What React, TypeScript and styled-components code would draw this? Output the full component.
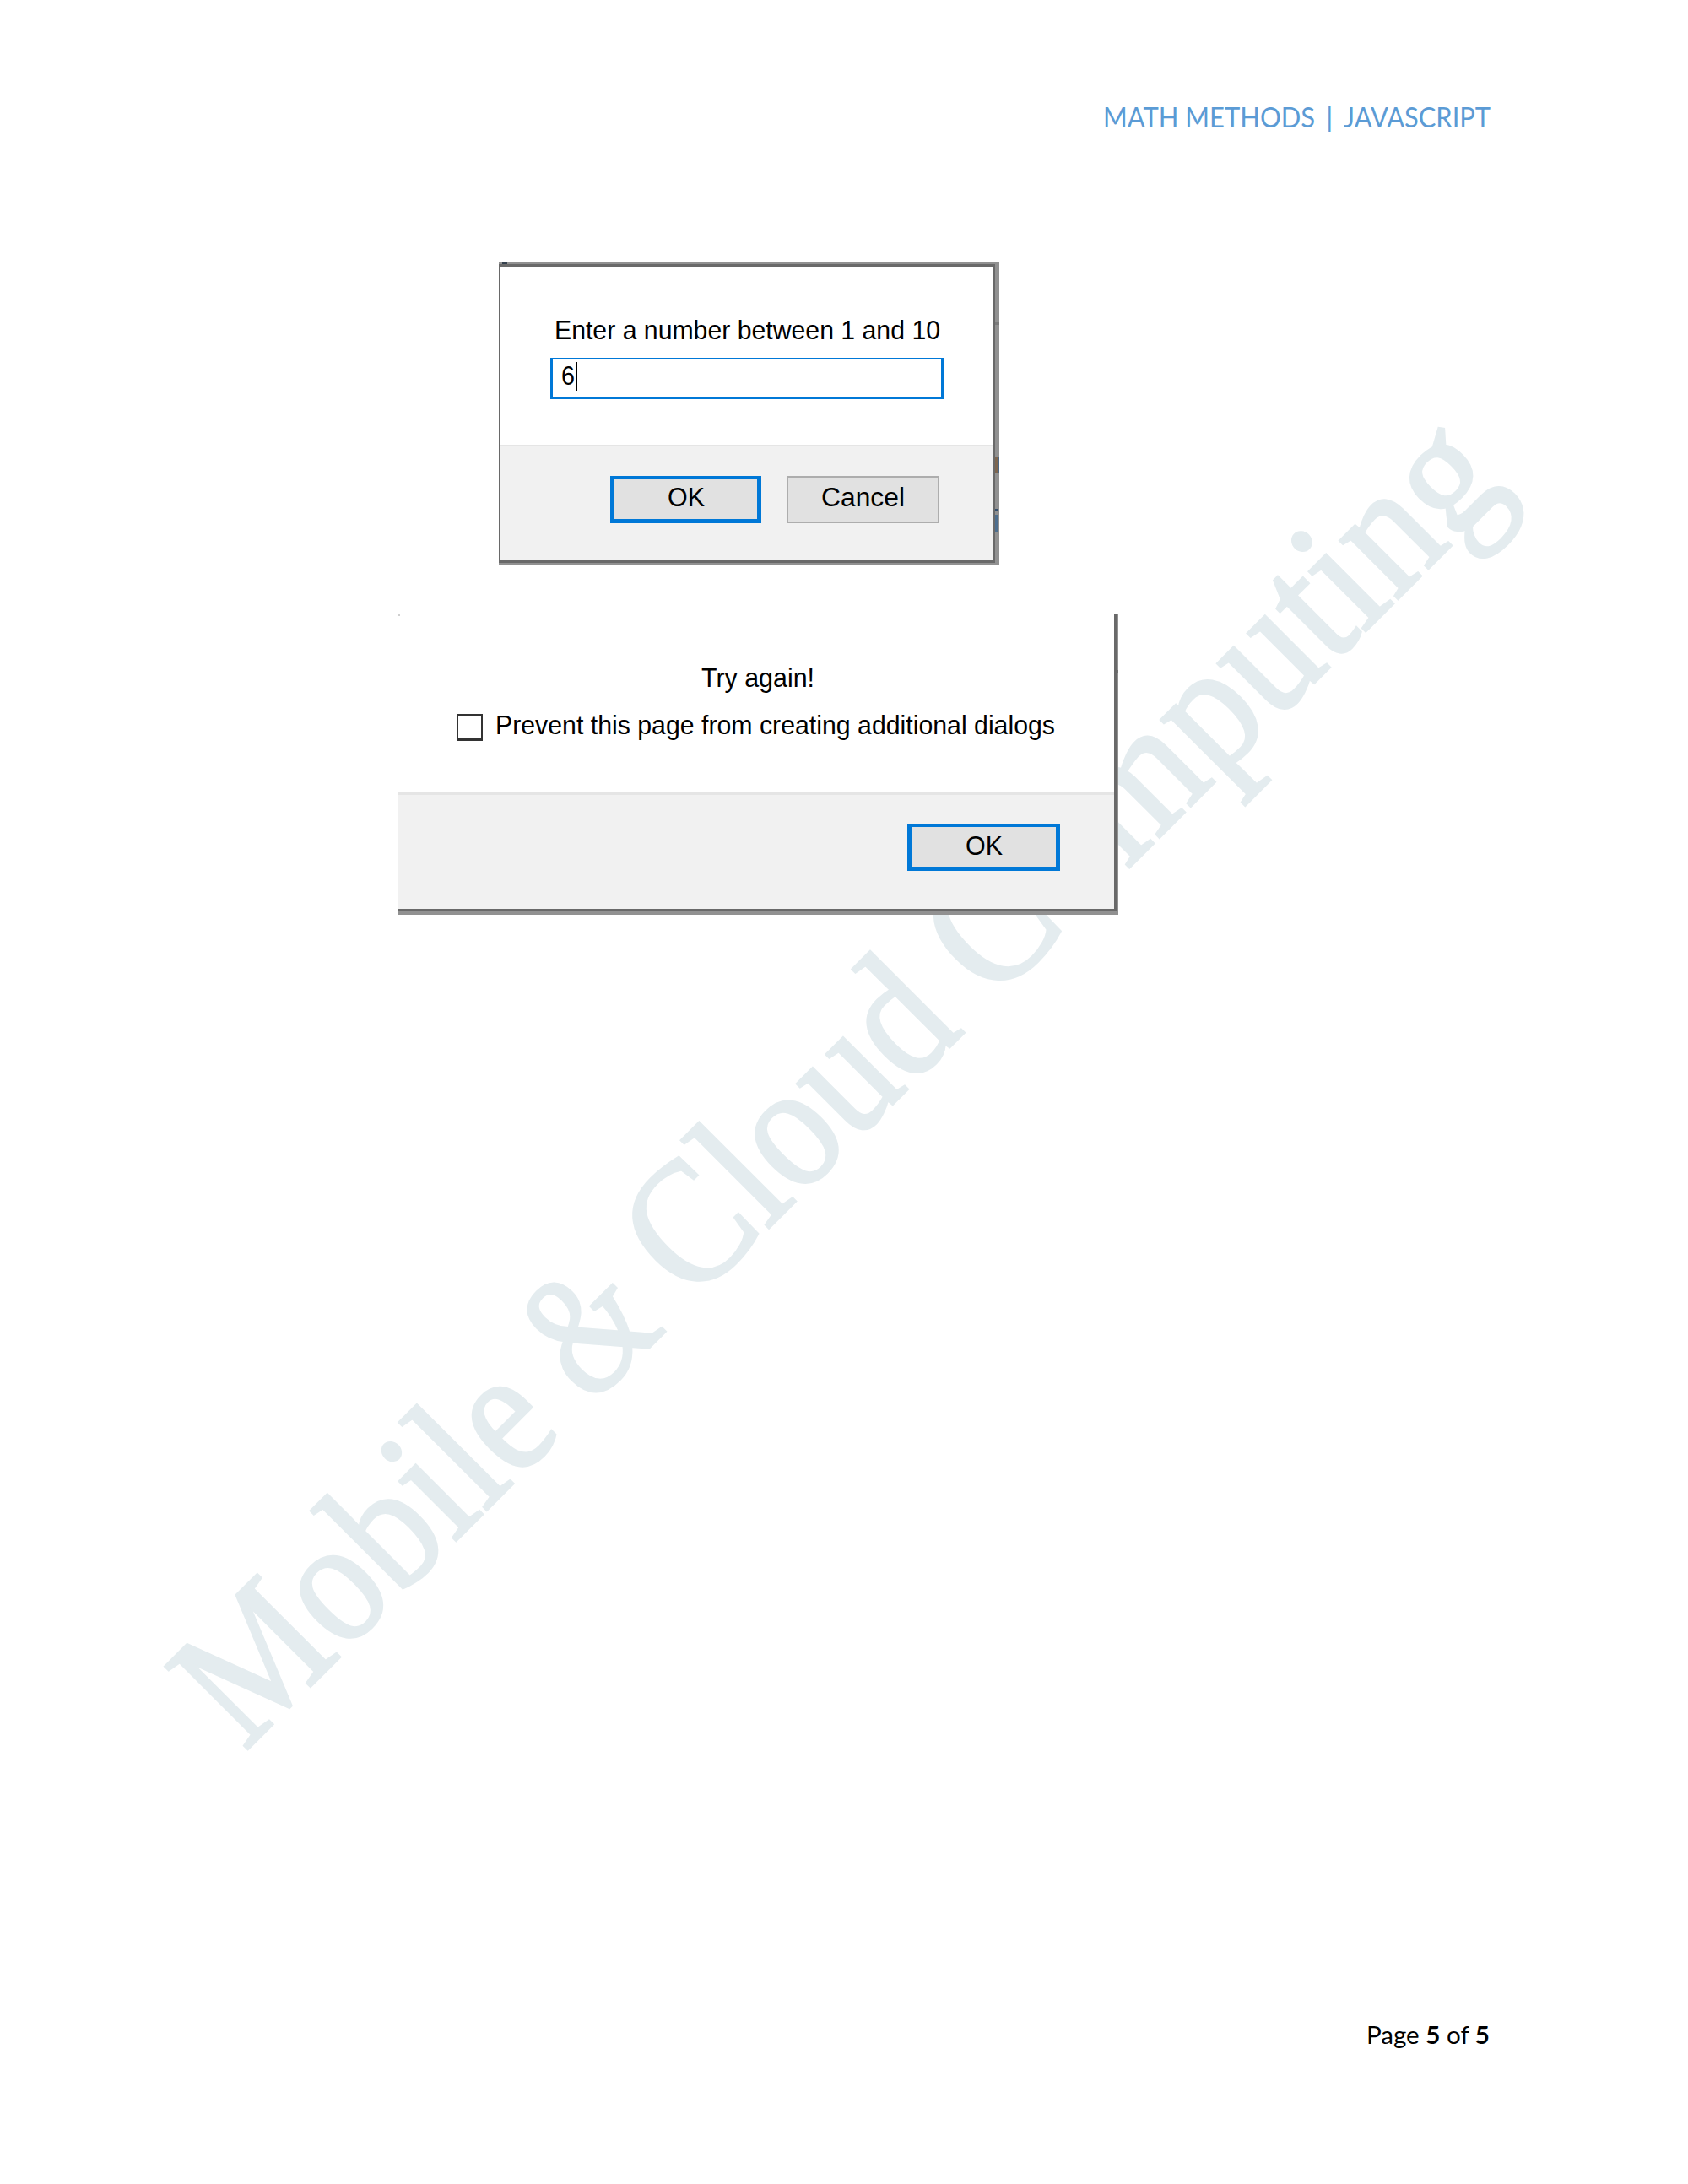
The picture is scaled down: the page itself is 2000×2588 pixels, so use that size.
import React, { useLayoutEffect, useRef, useState } from "react";
import styled, { createGlobalStyle } from "styled-components";

const GlobalStyle = createGlobalStyle`
  * { box-sizing: border-box; }
  html, body { margin: 0; padding: 0; background: #fff; }
`;

const sans = `"Liberation Sans", Arial, sans-serif`;
const humanist = `Lato, Carlito, Calibri, sans-serif`;

const Page = styled.main`
  position: relative;
  display: flex;
  flex-direction: column;
  width: 2000px;
  height: 2588px;
  overflow: hidden;
  background: #fff;
`;

const FitBox = styled.span<{ $width: number }>`
  display: block;
  flex: none;
  width: ${(p) => p.$width}px;
  white-space: pre;
`;

const FitInner = styled.span`
  display: inline-block;
  transform-origin: 0 50%;
`;

/* Condenses or widens a line so that it fills the given measure. */
function Fit({ width, children }: { width: number; children: React.ReactNode }) {
  const ref = useRef<HTMLSpanElement>(null);
  const [scale, setScale] = useState(1);
  useLayoutEffect(() => {
    if (ref.current) {
      const natural = parseFloat(getComputedStyle(ref.current).width);
      if (natural > 0) setScale(width / natural);
    }
  }, [width]);
  return (
    <FitBox $width={width}>
      <FitInner ref={ref} style={{ transform: `scaleX(${scale})` }}>
        {children}
      </FitInner>
    </FitBox>
  );
}

const Watermark = styled.div`
  position: absolute;
  left: 290px;
  top: 1898.5px;
  display: flex;
  font: 211px/212px "Liberation Serif", "Times New Roman", serif;
  color: #e4ecef;
  -webkit-text-stroke: 3.5px #e4ecef;
  paint-order: stroke fill;
  white-space: pre;
  transform-origin: 0 177.5px;
  transform: rotate(-45deg);
`;

const WatermarkWord = styled.div<{ $gap: number }>`
  margin-right: ${(p) => p.$gap}px;
`;

const Header = styled.header`
  display: flex;
  justify-content: flex-end;
  height: 311px;
  padding: 118.6px 234.5px 0 0;
  font: 32px/40px ${humanist};
  color: #5b9bd5;
`;

const Divider = styled.span`
  width: 16px;
  margin: 0 8.2px 0 9px;
  text-align: center;
`;

const Footer = styled.footer`
  display: flex;
  justify-content: flex-end;
  margin-top: auto;
  padding: 0 235px 159px 0;
  font: 29px/36px ${humanist};
  color: #000;
`;

const Dialog = styled.section`
  position: relative;
  display: flex;
  flex-direction: column;
  font: 30.7px/36px ${sans};
  color: #000;
`;

const PromptDialog = styled(Dialog)`
  width: 593px;
  height: 358px;
  margin-left: 591px;
  border: solid #919191;
  border-width: 2px 5px 2px 0;
`;

const AlertDialog = styled(Dialog)`
  width: 853px;
  height: 356px;
  margin: 59px 0 0 472px;
  border: solid #919191;
  border-width: 0 2px 5px 0;
`;

const Window = styled.div<{ $edges: string }>`
  flex: 1;
  display: flex;
  flex-direction: column;
  border: solid #696969;
  border-width: ${(p) => p.$edges};
  background: #fff;
`;

const PromptBody = styled.div`
  flex: 1;
  padding: 58px 0 0 59px;
`;

const PromptLabel = styled.div`
  padding-left: 5px;
`;

const Field = styled.div`
  display: flex;
  align-items: flex-start;
  width: 466px;
  height: 49px;
  margin-top: 14px;
  padding: 2px 0 0 10px;
  border: solid #0078d7;
  border-width: 2px 3px 3px;
`;

const Caret = styled.span`
  width: 2px;
  height: 34px;
  margin: 1px 0 0 1px;
  background: #000;
`;

const Actions = styled.div<{ $height: number; $right: number; $line: number }>`
  display: flex;
  justify-content: flex-end;
  gap: 30px;
  height: ${(p) => p.$height}px;
  padding: ${(p) => (p.$line === 3 ? 34 : 35)}px ${(p) => p.$right}px 0 0;
  border-top: ${(p) => p.$line}px solid #e5e5e5;
  background: #f1f1f1;
`;

const Button = styled.button<{ $primary?: boolean; $width: number; $top: number }>`
  display: flex;
  justify-content: center;
  align-items: flex-start;
  width: ${(p) => p.$width}px;
  height: 56px;
  margin: 0;
  padding: ${(p) => p.$top}px 0 0;
  border: ${(p) => (p.$primary ? "solid #0078d7" : "2px solid #adadad")};
  border-width: ${(p) => (p.$primary ? "4px 5px 5px" : "2px")};
  border-radius: 0;
  background: #e1e1e1;
  color: #000;
  font: inherit;
  text-align: left;
`;

const AlertBody = styled.div`
  flex: 1;
  padding: 58px 0 0 69px;
`;

const Message = styled.div`
  padding-left: 290px;
`;

const CheckRow = styled.label`
  display: flex;
  align-items: flex-start;
  gap: 15px;
  margin-top: 20px;
`;

const CheckBox = styled.span`
  width: 31px;
  height: 32px;
  margin-top: 4px;
  border: solid #333;
  border-width: 2px 2px 3px;
  background: #fff;
`;

const Speck = styled.i<{ $x: number; $y: number; $w: number; $h: number; $color: string }>`
  position: absolute;
  left: ${(p) => p.$x}px;
  top: ${(p) => p.$y}px;
  width: ${(p) => p.$w}px;
  height: ${(p) => p.$h}px;
  background: ${(p) => p.$color};
`;

export default function App() {
  return (
    <Page>
      <GlobalStyle />
      <Watermark>
        <WatermarkWord $gap={44}><Fit width={536}>Mobile</Fit></WatermarkWord>
        <WatermarkWord $gap={42}><Fit width={128}>&amp;</Fit></WatermarkWord>
        <WatermarkWord $gap={46}><Fit width={458}>Cloud</Fit></WatermarkWord>
        <WatermarkWord $gap={0}><Fit width={867}>Computing</Fit></WatermarkWord>
      </Watermark>

      <Header>
        <Fit width={251}>MATH METHODS</Fit>
        <Divider>|</Divider>
        <Fit width={174}>JAVASCRIPT</Fit>
      </Header>

      <PromptDialog>
        <Window $edges="3px 2px 3px 2px">
          <PromptBody>
            <PromptLabel><Fit width={457}>Enter a number between 1 and 10</Fit></PromptLabel>
            <Field>
              <Fit width={16}>6</Fit>
              <Caret />
            </Field>
          </PromptBody>
          <Actions $height={137} $right={64} $line={2}>
            <Button $primary $width={179} $top={4}><Fit width={44}>OK</Fit></Button>
            <Button $width={181} $top={6}><Fit width={99}>Cancel</Fit></Button>
          </Actions>
        </Window>
        <Speck $x={4} $y={-2} $w={6} $h={2} $color="#34404d" />
        <Speck $x={588} $y={69} $w={5} $h={3} $color="#7b7b7b" />
        <Speck $x={588} $y={228} $w={3} $h={20} $color="#7d6650" />
        <Speck $x={591} $y={228} $w={2} $h={20} $color="#4c6885" />
        <Speck $x={588} $y={290} $w={3} $h={2} $color="#344f6d" />
        <Speck $x={588} $y={297} $w={3} $h={20} $color="#4d6e8e" />
      </PromptDialog>

      <AlertDialog>
        <Window $edges="0 3px 2px 0">
          <AlertBody>
            <Message><Fit width={134}>Try again!</Fit></Message>
            <CheckRow>
              <CheckBox />
              <Fit width={663}>Prevent this page from creating additional dialogs</Fit>
            </CheckRow>
          </AlertBody>
          <Actions $height={138} $right={64} $line={3}>
            <Button $primary $width={181} $top={5}><Fit width={44}>OK</Fit></Button>
          </Actions>
        </Window>
        <Speck $x={0} $y={0} $w={2} $h={2} $color="#cfcfcf" />
        <Speck $x={851} $y={66} $w={2} $h={3} $color="#707070" />
      </AlertDialog>

      <Footer>
        <Fit width={146}>
          Page <b>5</b> of <b>5</b>
        </Fit>
      </Footer>
    </Page>
  );
}
